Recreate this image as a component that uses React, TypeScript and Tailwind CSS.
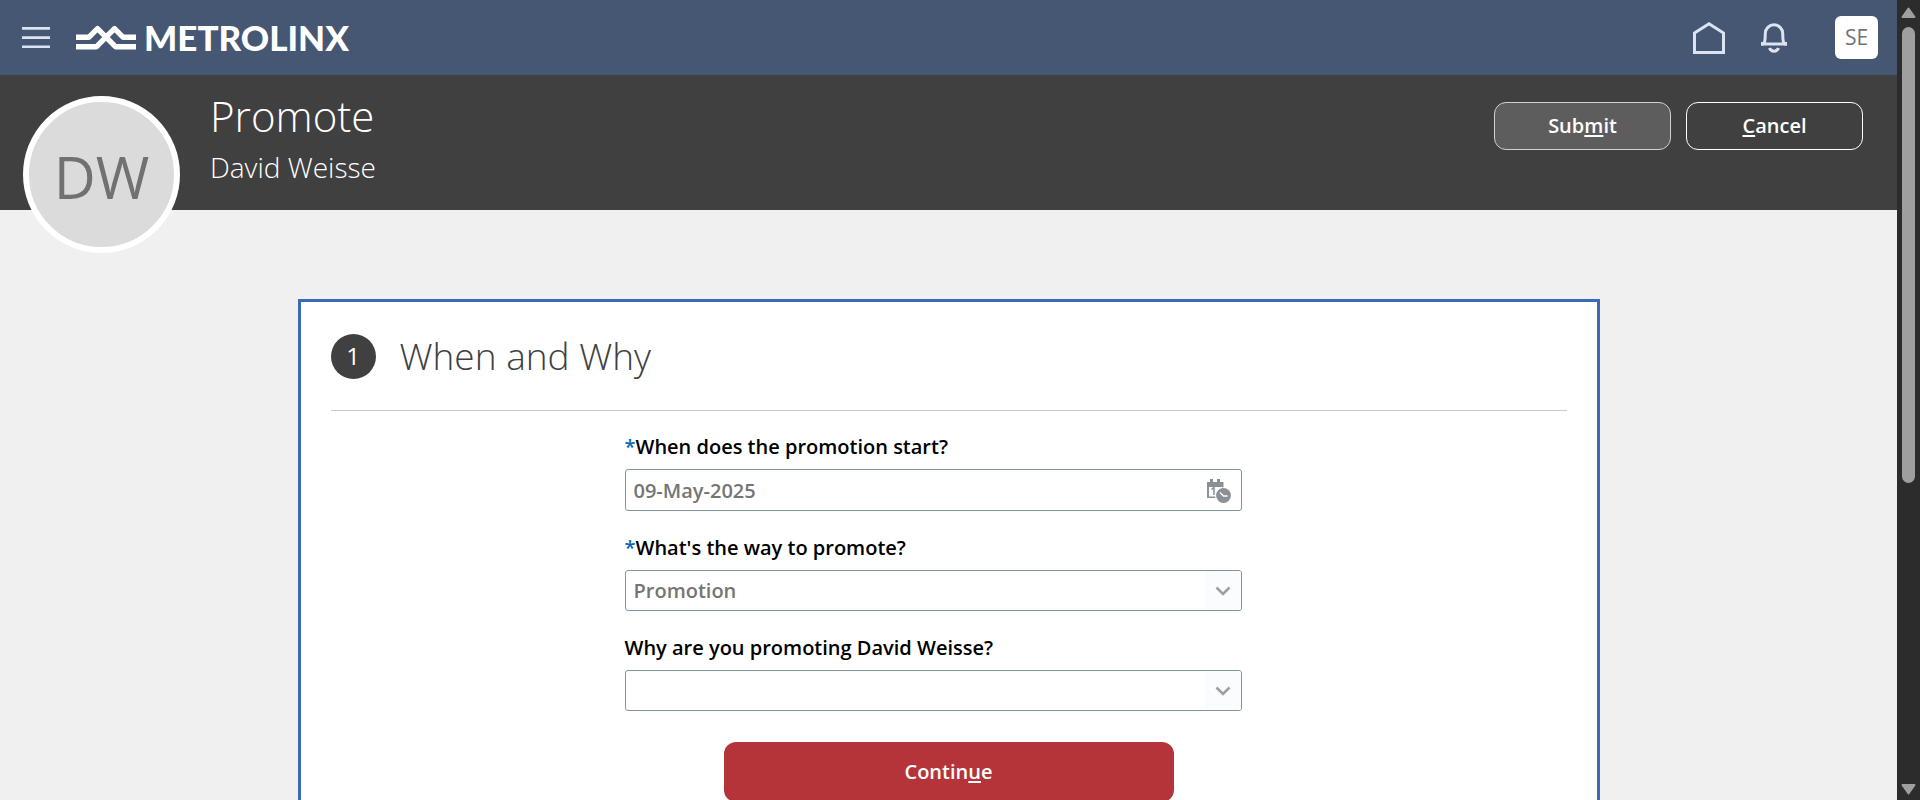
import React from 'react';

const inputBox = 'w-full rounded-[3px] border border-[#7f95a1] bg-white pl-2 text-[20px] font-semibold text-[#757575]';

function Key({ children }: { children: React.ReactNode }) {
  return <span className="underline decoration-2 underline-offset-2">{children}</span>;
}

function Label({ id, required, children }: { id: string; required?: boolean; children: React.ReactNode }) {
  return (
    <label htmlFor={id} className="flex h-6 items-center whitespace-nowrap text-[20px] font-semibold text-black">
      {required && <span className="text-[#0567b4]">*</span>}
      {children}
    </label>
  );
}

function SelectField({ id, options }: { id: string; options: string[] }) {
  return (
    <div className="relative">
      <select id={id} className={`${inputBox} block h-[41px] appearance-none`}>
        {options.map((o) => <option key={o}>{o}</option>)}
      </select>
      <span className="pointer-events-none absolute inset-y-px right-px flex w-9 items-center justify-center rounded-r-[2px] bg-[#fbfcfe]">
        <svg width="16" height="10" viewBox="0 0 16 10" fill="none" stroke="#a0a0a0" strokeWidth="2.6"><path d="M1.500 1.500 8 8l6.500-6.500" /></svg>
      </span>
    </div>
  );
}

function CalendarClockIcon() {
  return (
    <svg width="24" height="24" viewBox="0 0 24 24" className="block">
      <path d="M3 0h3v3h4V0h3v3h3.500v6H15V8H2v9.500h6.500V19H0V3h3z" fill="#8b9095" />
      <text x="3.500" y="16" fontSize="10" fontWeight="700" fill="#8b9095">1</text>
      <circle cx="16.500" cy="16.500" r="8.300" fill="white" />
      <circle cx="16.500" cy="16.500" r="7.400" fill="#8b9095" />
      <path d="M13 13.500 16.500 17h4" fill="none" stroke="white" strokeWidth="1.400" />
    </svg>
  );
}

export default function App() {
  return (
    <div className="flex h-screen bg-[#f0f0f0] font-['Open_Sans','Noto_Sans',sans-serif]">
      <div className="min-w-0 flex-1 overflow-y-auto [scrollbar-width:none]">
        <header className="flex h-[75px] items-center bg-[#465773] pr-[19px] pl-[22px]">
          <button aria-label="Navigator" className="flex">
            <svg width="28" height="22" viewBox="0 0 28 22" fill="#dbe4f0"><path d="M0 0h28v2.700H0zM0 9.200h28v2.700H0zM0 18.400h28v2.700H0z" /></svg>
          </button>
          <a href="#" aria-label="Metrolinx" className="ml-[26px] flex items-center gap-2 text-white">
            <svg width="60" height="26" viewBox="0 0 60 26" fill="none" stroke="white" strokeWidth="5.4" strokeLinejoin="round">
              <path d="M0 12.300h12.800L21.500 3.600 39.700 21.800H60" />
              <path d="M0 21.800h20.300L38.500 3.600l8.700 8.700H60" />
            </svg>
            <span className="pb-0.5 font-['Lato'] text-[35px] leading-8 font-black">METROLINX</span>
          </a>
          <div className="ml-auto flex items-center">
            <a href="#" aria-label="Home" className="mr-9">
              <svg width="32" height="32" viewBox="0 0 32 32" fill="none" stroke="#dbe4f0" strokeWidth="3"><path d="M1.500 11 16 1.800 30.500 11v19.500h-29z" /></svg>
            </a>
            <button aria-label="Notifications" className="mr-12">
              <svg width="26" height="30" viewBox="0 0 26 30" fill="none" stroke="#dbe4f0" strokeWidth="3">
                <path d="M0 21h26M3.300 20.500C4.300 17 4.300 14 4.300 10.500a8.700 8.700 0 0 1 17.400 0c0 3.500 0 6.500 1 10M8.500 25c1.500 4.200 7.500 4.200 9 0" />
                <path d="M1.500 19v3.500M24.500 19v3.500" />
              </svg>
            </button>
            <button className="h-[43px] w-[43px] rounded-md bg-white text-[21px] text-[#737373]">SE</button>
          </div>
        </header>

        <section className="flex h-[135px] items-start bg-[#404040] pr-[34px] pl-[23px]">
          <div className="mt-[21px] flex h-[157px] w-[157px] shrink-0 items-center justify-center rounded-full border-6 border-white bg-[#dbdbdb] pt-1 text-[58px] text-[#717171]">DW</div>
          <div className="mt-4 ml-[30px] font-light text-white">
            <h1 className="text-[42px] leading-[50px]">Promote</h1>
            <p className="text-[28px] leading-[52px]">David Weisse</p>
          </div>
          <div className="mt-[27px] ml-auto flex gap-[15px] text-[20px] font-semibold text-white">
            <button className="h-12 w-[177px] rounded-xl border border-[#d0d0d0] bg-[#5d5d5d]">Sub<Key>m</Key>it</button>
            <button className="h-12 w-[177px] rounded-xl border border-white"><Key>C</Key>ancel</button>
          </div>
        </section>

        <main className="mx-auto mt-[89px] w-full max-w-[1302px] border-3 border-[#3a6ab8] bg-white px-[30px] pb-16">
          <div className="flex h-[109px] items-center gap-6 border-b border-[#cccccc]">
            <span className="flex h-[45px] w-[45px] items-center justify-center rounded-full bg-[#404040] text-[24px] text-white">1</span>
            <h2 className="text-[37px] font-light text-[#404040]">When and Why</h2>
          </div>
          <form className="flex flex-col" onSubmit={(e) => e.preventDefault()}>
            <div className="mt-6 flex w-full max-w-[617px] flex-col gap-[25px] lg:ml-[294px]">
              <div className="flex flex-col gap-[10px]">
                <Label id="start" required>When does the promotion start?</Label>
                <div className="relative">
                  <input id="start" defaultValue="09-May-2025" className={`${inputBox} block h-[42px]`} />
                  <button type="button" aria-label="Select date" className="absolute top-[10px] right-[11px]"><CalendarClockIcon /></button>
                </div>
              </div>
              <div className="flex flex-col gap-[10px]">
                <Label id="way" required>What's the way to promote?</Label>
                <SelectField id="way" options={['Promotion']} />
              </div>
              <div className="flex flex-col gap-[10px]">
                <Label id="why">Why are you promoting David Weisse?</Label>
                <SelectField id="why" options={['']} />
              </div>
            </div>
            <button className="mt-[31px] h-[60px] w-[450px] self-center rounded-xl bg-[#b53439] text-[20px] font-semibold text-white">Contin<Key>u</Key>e</button>
          </form>
        </main>
      </div>
      <div className="flex w-[23px] shrink-0 flex-col items-center bg-[#2c2c2c] pt-[7px] pb-[5px]" aria-hidden="true">
        <svg width="15" height="12" viewBox="0 0 15 12" fill="#9f9f9f" stroke="#9f9f9f" strokeWidth="2" strokeLinejoin="round"><path d="M7.500 1.500 13.500 10h-12z" /></svg>
        <div className="mt-2 h-[456px] w-[13px] rounded-full bg-[#9f9f9f]" />
        <svg className="mt-auto" width="15" height="12" viewBox="0 0 15 12" fill="#9f9f9f" stroke="#9f9f9f" strokeWidth="2" strokeLinejoin="round"><path d="M7.500 10.500 13.500 2h-12z" /></svg>
      </div>
    </div>
  );
}
